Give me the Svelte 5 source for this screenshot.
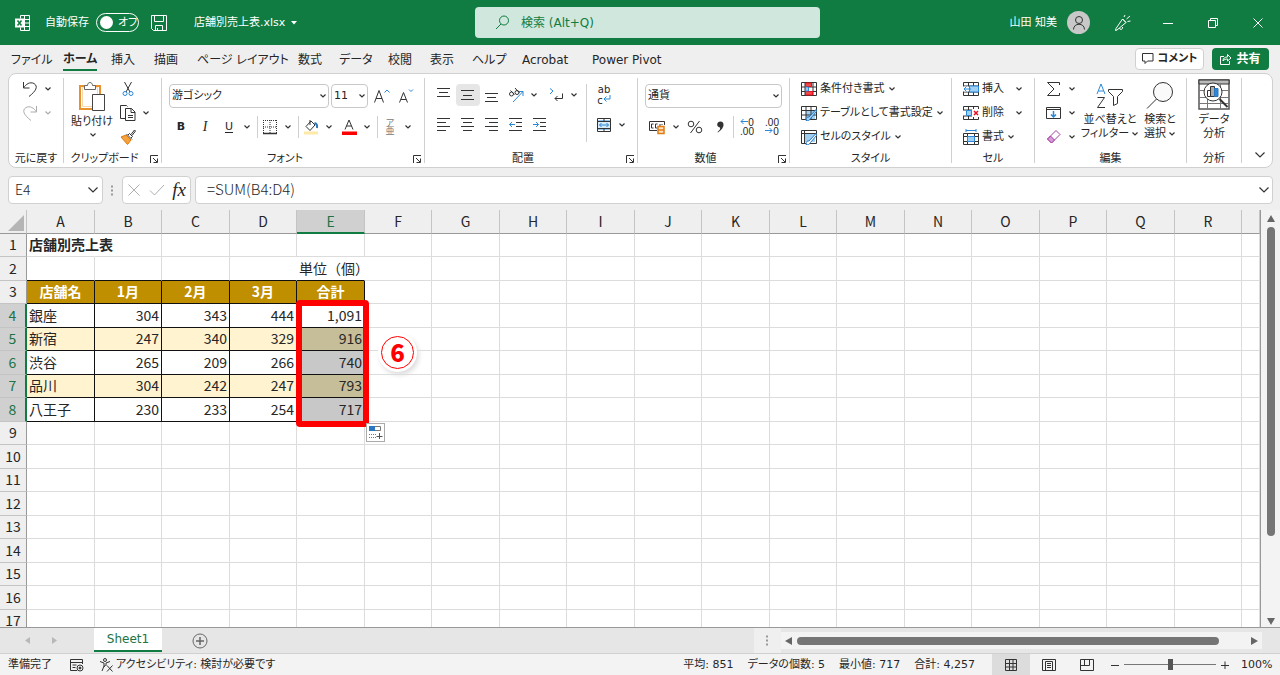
<script lang="ts">
  type Cell = { text: string; cls?: string };

  const tabs = ['ファイル', 'ホーム', '挿入', '描画', 'ページ レイアウト', '数式', 'データ', '校閲', '表示', 'ヘルプ', 'Acrobat', 'Power Pivot'];
  const columns = 'ABCDEFGHIJKLMNOPQR'.split('');
  const rowNumbers = Array.from({ length: 17 }, (_, i) => i + 1);

  const head = ['店舗名', '1月', '2月', '3月', '合計'];
  const sales: [string, number, number, number][] = [
    ['銀座', 304, 343, 444],
    ['新宿', 247, 340, 329],
    ['渋谷', 265, 209, 266],
    ['品川', 304, 242, 247],
    ['八王子', 230, 233, 254],
  ];

  let activeTab = $state('ホーム');
  let formula = $state('=SUM(B4:D4)');
  let zoomLevel = $state(50);

  const totals = sales.map(([, a, b, c]) => a + b + c);
  const sum = totals.reduce((a, b) => a + b, 0);
  const stats = [
    `平均: ${Math.round(sum / totals.length)}`,
    `データの個数: ${totals.length}`,
    `最小値: ${Math.min(...totals)}`,
    `合計: ${sum.toLocaleString('en-US')}`,
  ];

  function cellAt(row: number, col: number): Cell {
    if (row === 1 && col === 0) return { text: '店舗別売上表', cls: 'title open' };
    if (row === 2 && col < 5) {
      if (col === 4) return { text: '単位（個）', cls: 'unit open under' };
      return { text: '', cls: col === 3 ? 'open under' : 'under' };
    }
    if (row === 3 && col < 5) return { text: head[col], cls: 'head boxed' };
    if (row >= 4 && row <= 8 && col < 5) {
      const i = row - 4;
      const band = i % 2 ? ' band' : '';
      if (col === 0) return { text: sales[i][0], cls: 'boxed' + band };
      if (col < 4) return { text: String(sales[i][col]), cls: 'boxed num' + band };
      return { text: totals[i].toLocaleString('en-US'), cls: 'boxed num' + band + (i ? ' selected' : '') };
    }
    return { text: '' };
  }
</script>

{#snippet chevron()}
  <svg class="chev" width="8" height="6" viewBox="0 0 8 6"><path d="M1.5 1.5L4 4l2.5-2.5" /></svg>
{/snippet}

{#snippet bigChevron()}
  <svg class="chev" width="12" height="8" viewBox="0 0 12 8"><path d="M1.5 1.5L6 6l4.500-4.500" /></svg>
{/snippet}

{#snippet drop(label)}
  <button class="drop" aria-label={label}>{@render chevron()}</button>
{/snippet}

{#snippet launcher(label)}
  <button class="launcher" aria-label={label}>
    <svg width="9" height="9" viewBox="0 0 9 9"><path d="M.5 8V.5H8M3 3l4 4M7.500 3.500v4h-4" /></svg>
  </button>
{/snippet}

{#snippet lines(rows)}
  <svg width="16" height="16" viewBox="0 0 16 16">
    {#each rows as [x, y, w]}
      <path d="M{x} {y}.5h{w}" />
    {/each}
  </svg>
{/snippet}

<div class="app">
  <header class="titlebar">
    <div class="title-left">
      <svg class="light" width="16" height="16" viewBox="0 0 16 16">
        <path d="M5.500 3.500v-3h9v15h-9v-3M9.500.5v15M10 4.500h4.500M10 8h4.500M10 11.500h4.500" />
        <path d="M0 3.500h9v9H0z" fill="#fff" stroke="none" />
        <path d="M2.500 5.500l4 5M6.500 5.500l-4 5" stroke="#107c41" stroke-width="1.500" />
      </svg>
      <span class="autosave">自動保存</span>
      <button class="toggle" role="switch" aria-checked="false" aria-label="自動保存"><i></i>オフ</button>
      <button class="save" aria-label="上書き保存">
        <svg class="light" width="16" height="16" viewBox="0 0 16 16"><path d="M.5.500h15v15h-13l-2-2zM3.500.500v6h9v-6M4.500 15.500v-5h7v5M6.500 13v2" /></svg>
      </button>
      <button class="filename">店舗別売上表.xlsx
        <svg width="6" height="4" viewBox="0 0 6 4"><path d="M0 0h6L3 3.500z" fill="#fff" stroke="none" /></svg>
      </button>
    </div>
    <label class="search">
      <svg width="15" height="15" viewBox="0 0 15 15"><circle cx="9" cy="5.500" r="4.500" /><path d="M6 9l-5 5" /></svg>
      <input type="search" placeholder="検索 (Alt+Q)" aria-label="検索" />
    </label>
    <div class="title-right">
      <span class="user">山田 知美</span>
      <button class="avatar" aria-label="アカウント">
        <svg width="14" height="14" viewBox="0 0 14 14"><circle cx="7" cy="4" r="3.500" /><path d="M1.500 13.500c0-7 11-7 11 0" /></svg>
      </button>
      <button class="winbtn" aria-label="新機能">
        <svg class="light" width="18" height="18" viewBox="0 0 18 18"><path d="M2 14.500L8.500 5l3.500 3.500-9 7.500-1.500.5zM5.500 14c.5 2.500 3.500 1.500 3-1M10 3l1-2M12.500 5L16 2M13.500 7.500l3-.5M8.500 5L12 8.500" /></svg>
      </button>
      <button class="winbtn" aria-label="最小化"><svg class="light" width="10" height="10" viewBox="0 0 10 10"><path d="M0 5.500h10" /></svg></button>
      <button class="winbtn" aria-label="元のサイズに戻す"><svg class="light" width="10" height="10" viewBox="0 0 10 10"><path d="M.5 2.500h7v7h-7zM2.500 2.500v-2h7v7h-2" /></svg></button>
      <button class="winbtn" aria-label="閉じる"><svg class="light" width="10" height="10" viewBox="0 0 10 10"><path d="M.5.500l9 9M9.500.500l-9 9" /></svg></button>
    </div>
  </header>

  <nav class="tabs">
    {#each tabs as tab}
      <button class="tab" class:active={tab === activeTab} onclick={() => (activeTab = tab)}><span>{tab}</span></button>
    {/each}
    <div class="actions">
      <button class="comment">
        <svg width="12" height="12" viewBox="0 0 12 12"><path d="M.5.500h10.500v7.500H5.500L3 10.500V8H.5z" /></svg>
        コメント
      </button>
      <button class="share">
        <svg class="light" width="12" height="12" viewBox="0 0 12 12"><path d="M4 3.500H.5v8h9V8M3 8c0-3 2-4 4.500-4V1.500L11 5 7.500 8V6C5.500 6 4 6.500 3 8z" /></svg>
        共有
      </button>
    </div>
  </nav>

  <section class="ribbon">
    <div class="group undo">
      <div class="stack">
        <div class="line">
          <button class="tool" aria-label="元に戻す"><svg width="16" height="16" viewBox="0 0 16 16"><path d="M1.500 1v6h6M1.500 7C4 3 8 .5 12 2.500c4.500 3 2 7.500-5 13" /></svg></button>
          {@render drop('元に戻す一覧')}
        </div>
        <div class="line faded">
          <button class="tool" aria-label="やり直し"><svg width="16" height="16" viewBox="0 0 16 16"><path d="M14.500 1v6h-6M14.500 7C12 3 8 .5 4 2.500c-4.500 3-2 7.500 5 13" /></svg></button>
          {@render drop('やり直し一覧')}
        </div>
      </div>
      <footer>元に戻す</footer>
    </div>

    <div class="group clipboard">
      <div class="body">
        <button class="big paste">
          <svg width="28" height="30" viewBox="0 0 28 30">
            <path d="M2 4h20v23H2z" fill="#fff" stroke="#e8912d" stroke-width="2" />
            <path d="M4.500 5.500h15v19h-15z" fill="#fff" stroke="#f8d9ae" />
            <path d="M6.500 7.500v-4h3c0-4 5-4 5 0h3v4z" fill="#fff" stroke="#666" />
            <path d="M14.500 12.500h12v16h-12z" fill="#fff" stroke="#444" />
          </svg>
          貼り付け
          {@render chevron()}
        </button>
        <div class="stack clips">
          <button class="tool" aria-label="切り取り"><svg width="16" height="16" viewBox="0 0 16 16"><path d="M4.500 1L10 11M11.500 1L6 11" /><circle cx="5" cy="12.500" r="2" stroke="#2b88d8" /><circle cx="11" cy="12.500" r="2" stroke="#2b88d8" /></svg></button>
          <div class="line">
            <button class="tool" aria-label="コピー"><svg width="16" height="16" viewBox="0 0 16 16"><path d="M5.500 13.500h-5v-13h6l1 1M5.500 3.500h6l3.500 3.500v8.500H5.500zM11 3.500V7.500h4M8 10.500h5M8 12.500h5" /></svg></button>
            {@render drop('コピー一覧')}
          </div>
          <button class="tool" aria-label="書式のコピー"><svg width="16" height="16" viewBox="0 0 16 16"><path d="M1 8l5-2 5 5-3.500 4.500z" fill="#f6a23c" stroke="#d97a12" /><path d="M6.500 5l5.500 5.500M8 6l1.500-1.500 3 3L11 9M11 5.500L14.500 1l1 1-3.500 4.500" /></svg></button>
        </div>
      </div>
      <footer>クリップボード{@render launcher('クリップボードの設定')}</footer>
    </div>

    <div class="group font">
      <div class="rows">
        <div class="line">
          <label class="pick family"><select aria-label="フォント"><option>游ゴシック</option></select>{@render chevron()}</label>
          <label class="pick size"><select aria-label="フォント サイズ"><option>11</option></select>{@render chevron()}</label>
          <button class="tool" aria-label="フォント サイズの拡大"><svg width="16" height="16" viewBox="0 0 16 16"><path d="M.5 14.500L5 2.500l4.500 12M2 10.500h6" /><path d="M10.500 4.500l2.500-2.500 2.500 2.500" stroke="#2b88d8" /></svg></button>
          <button class="tool" aria-label="フォント サイズの縮小"><svg width="16" height="16" viewBox="0 0 16 16"><path d="M1.500 14.500L5.500 4.500l4 10M3 11.500h5" /><path d="M11 1.500l2 2 2-2" stroke="#2b88d8" /></svg></button>
        </div>
        <div class="line">
          <button class="tool b">B</button>
          <button class="tool i">I</button>
          <button class="tool u">U</button>
          {@render drop('下線')}
          <i class="sep"></i>
          <button class="tool" aria-label="罫線"><svg width="16" height="16" viewBox="0 0 16 16"><path d="M1 1.500h14M1 8h14M1.500 1v13M8 1v13M14.500 1v13" stroke-dasharray="1 1" /><path d="M1 14.500h14" stroke-width="1.500" /></svg></button>
          {@render drop('罫線一覧')}
          <i class="sep"></i>
          <button class="tool" aria-label="塗りつぶしの色"><svg width="16" height="16" viewBox="0 0 16 16"><path d="M3 7.500L8 2l4 4-5 5.500zM7 1v5" /><path d="M11.500 4c2 .5 3 2 2.500 5" stroke="#2b77c0" stroke-width="2" /><path d="M1 12.500h14v3H1z" fill="#ffe9a8" stroke="none" /></svg></button>
          {@render drop('塗りつぶしの色一覧')}
          <button class="tool color" aria-label="フォントの色"><svg width="16" height="16" viewBox="0 0 16 16"><path d="M4 10.500L8 1l4 9.500M5.500 7h5" /><path d="M1 12.500h15v3.500H1z" fill="#f00" stroke="none" /></svg></button>
          {@render drop('フォントの色一覧')}
          <i class="sep"></i>
          <button class="tool ruby" aria-label="ふりがな"><span>ア</span><span>亜</span></button>
          {@render drop('ふりがな一覧')}
        </div>
      </div>
      <footer>フォント{@render launcher('フォントの設定')}</footer>
    </div>

    <div class="group align">
      <div class="body">
        <div class="rows">
          <div class="line">
            <button class="tool" aria-label="上揃え">{@render lines([[1, 1, 13], [3, 5, 9], [1, 9, 13]])}</button>
            <button class="tool on" aria-label="上下中央揃え">{@render lines([[1, 3, 13], [3, 8, 9], [1, 12, 13]])}</button>
            <button class="tool" aria-label="下揃え">{@render lines([[1, 6, 13], [3, 10, 9], [1, 14, 13]])}</button>
            <button class="tool" aria-label="方向"><svg width="16" height="16" viewBox="0 0 16 16"><circle cx="3.500" cy="7" r="2" /><path d="M2.500 3.500l4 4M7 1l4.500 5" /><circle cx="9" cy="5.500" r="2" /><path d="M5 15L15 4.500M11 4.500h4V9" stroke="#2b88d8" /></svg></button>
            {@render drop('方向一覧')}
            <button class="tool dir" aria-label="文字列の方向"><svg width="16" height="16" viewBox="0 0 16 16"><path d="M2 1.500L5 4 2 7" stroke="#2b88d8" /><path d="M14.500 6.500v5H7M9.500 9L7 11.500 9.500 14" /></svg></button>
            {@render drop('文字列の方向一覧')}
          </div>
          <div class="line">
            <button class="tool" aria-label="左揃え">{@render lines([[1, 1, 13], [1, 5, 9], [1, 9, 13], [1, 13, 9]])}</button>
            <button class="tool" aria-label="中央揃え">{@render lines([[1, 1, 13], [3, 5, 9], [1, 9, 13], [3, 13, 9]])}</button>
            <button class="tool" aria-label="右揃え">{@render lines([[1, 1, 13], [5, 5, 9], [1, 9, 13], [5, 13, 9]])}</button>
            <button class="tool" aria-label="インデントを減らす"><svg width="16" height="16" viewBox="0 0 16 16"><path d="M1 1.500h13M8 5.500h6M8 9.500h6M1 13.500h13" /><path d="M7 7.500H1.500M4 5L1.500 7.500 4 10" stroke="#2b88d8" /></svg></button>
            <button class="tool" aria-label="インデントを増やす"><svg width="16" height="16" viewBox="0 0 16 16"><path d="M1 1.500h13M8 5.500h6M8 9.500h6M1 13.500h13" /><path d="M1 7.500h5.500M4 5l2.500 2.500L4 10" stroke="#2b88d8" /></svg></button>
          </div>
        </div>
        <i class="sep tall"></i>
        <div class="rows merge">
          <button class="tool wrap" aria-label="折り返して全体を表示する"><span>ab</span><span>c<svg width="8" height="8" viewBox="0 0 8 8"><path d="M7 0v4H1M3.500 1.500L1 4l2.500 2.500" stroke="#2b88d8" /></svg></span></button>
          <div class="line">
            <button class="tool" aria-label="セルを結合して中央揃え"><svg width="16" height="16" viewBox="0 0 16 16"><path d="M1.500 4h13v8h-13z" fill="#d8ebf9" stroke="#2b88d8" /><path d="M1.500 1.500h13v13h-13zM1.500 4.500h13M1.500 11.500h13M8 1.500v3M8 11.500v3" /><path d="M3.500 8h9M5.500 6l-2 2 2 2M10.500 6l2 2-2 2" stroke="#2b88d8" /></svg></button>
            {@render drop('結合一覧')}
          </div>
        </div>
      </div>
      <footer>配置{@render launcher('配置の設定')}</footer>
    </div>

    <div class="group number">
      <div class="rows">
        <label class="pick"><select aria-label="表示形式"><option>通貨</option></select>{@render chevron()}</label>
        <div class="line">
          <button class="tool" aria-label="通貨表示形式"><svg width="16" height="16" viewBox="0 0 16 16"><path d="M8 11.500H.5v-9h15V6M4.500 5h-2v4h2M8.500 5h-2v4h2M11 5v2M13 5v1" /><path d="M9 7.500h6v7H9zM9 11h6" fill="#fbe3c4" stroke="#e07b12" stroke-width="1.500" /></svg></button>
          {@render drop('通貨一覧')}
          <button class="tool" aria-label="パーセント スタイル"><svg width="16" height="16" viewBox="0 0 16 16"><circle cx="4" cy="5" r="2.800" /><circle cx="12" cy="11" r="2.800" /><path d="M12.500 2l-9 12" /></svg></button>
          <button class="tool" aria-label="桁区切りスタイル"><svg width="16" height="16" viewBox="0 0 16 16"><path d="M8.500 2.500c4 0 5 6-2.500 11l-.5-.5C8 11 8.500 9.500 8 8.500 4 8 4.500 2.500 8.500 2.500z" fill="#333" stroke="none" /></svg></button>
          <i class="sep"></i>
          <button class="tool dec" aria-label="小数点以下の表示桁数を増やす"><span><svg width="8" height="7" viewBox="0 0 8 7"><path d="M8 3.500H1M3.500 1L1 3.500 3.500 6" stroke="#2b88d8" /></svg>0</span><span>.00</span></button>
          <button class="tool dec" aria-label="小数点以下の表示桁数を減らす"><span>.00</span><span><svg width="8" height="7" viewBox="0 0 8 7"><path d="M0 3.500h7M4.500 1L7 3.500 4.500 6" stroke="#2b88d8" /></svg>0</span></button>
        </div>
      </div>
      <footer>数値{@render launcher('表示形式の設定')}</footer>
    </div>

    <div class="group style">
      <div class="stack">
        <button class="item">
          <svg width="16" height="16" viewBox="0 0 16 16"><path d="M.5 1.500h15v13H.5zM.5 6h15M.5 10.500h15M4 1.500v13M12 1.500v13" /><path d="M4.500 2h6v3.500h-6zM4.500 10.500h7V14h-7z" fill="#ef4a4a" stroke="#e81123" /><path d="M4.500 6v4h3V6z" fill="#9fd0f3" stroke="#2b88d8" /></svg>
          条件付き書式{@render chevron()}
        </button>
        <button class="item">
          <svg width="16" height="16" viewBox="0 0 16 16"><path d="M5 6h9v8H5z" fill="#9fd0f3" stroke="none" /><path d="M.5 1.500h15v13H.5zM.5 5.500h15M.5 10h15M5 1.500v13M10 1.500v13" /><path d="M5 15.500c0-3 1.500-4 3-3.500L15 4.500l.5 2-6 7c-1 2-2.500 2.500-4.500 2z" fill="#9fd0f3" stroke="#2b77c0" /></svg>
          テーブルとして書式設定{@render chevron()}
        </button>
        <button class="item">
          <svg width="16" height="16" viewBox="0 0 16 16"><path d="M.5 1.500h15v13H.5zM.5 4.500h15M3.500 1.500v13" /><path d="M4 5h10v8H4z" fill="#9fd0f3" stroke="none" /><path d="M5 15.500c0-3 1.500-4 3-3.500L15 4.500l.5 2-6 7c-1 2-2.500 2.500-4.500 2z" fill="#fff" stroke="#2b77c0" /></svg>
          セルのスタイル{@render chevron()}
        </button>
      </div>
      <footer>スタイル</footer>
    </div>

    <div class="group cells">
      <div class="stack">
        <button class="item far">
          <svg width="16" height="16" viewBox="0 0 16 16"><path d="M.5 1.500h15v13H.5zM.5 5h15M.5 11h15M5.500 1.500v13M10.500 1.500v13" /><path d="M6.500 5h9v6h-9z" fill="#9fd0f3" stroke="#2b88d8" /><path d="M0 5.500h6v5H0z" fill="#fff" stroke="none" /><path d="M8 8H1M3.500 5.500L1 8l2.500 2.500" stroke="#2b88d8" /></svg>
          <span>挿入</span>{@render chevron()}
        </button>
        <button class="item far">
          <svg width="16" height="16" viewBox="0 0 16 16"><path d="M.5 5V1.500h15V4M.5 11v3.500h15V12M5.500 1.500V5M10.500 1.500V4M5.500 11v3.500M10.500 12v2.500M0 5h9M0 11h9" /><path d="M3.500 5.500h5v5h-5z" fill="#9fd0f3" stroke="#2b88d8" /><path d="M11 6l4 4M15 6l-4 4" stroke="#e81123" stroke-width="1.500" /></svg>
          <span>削除</span>{@render chevron()}
        </button>
        <button class="item">
          <svg width="16" height="16" viewBox="0 0 16 16"><path d="M3 1.500h10M3 0v3M13 0v3" stroke="#2b88d8" /><path d="M.5 4.500h15v11H.5zM.5 7.500h15M.5 12.500h15M4.500 4.500v11M11.500 4.500v11" /><path d="M4.500 7.500h7v5h-7z" fill="#9fd0f3" stroke="#2b88d8" /></svg>
          <span>書式</span>{@render chevron()}
        </button>
      </div>
      <footer>セル</footer>
    </div>

    <div class="group edit">
      <div class="body">
        <div class="stack">
          <div class="line"><button class="tool" aria-label="合計"><svg width="16" height="16" viewBox="0 0 16 16"><path d="M13.500 4V1.500h-12L8 8l-6.500 6.500h12V12" /></svg></button>{@render drop('合計一覧')}</div>
          <div class="line"><button class="tool" aria-label="フィル"><svg width="16" height="16" viewBox="0 0 16 16"><path d="M.5 2.500h14v11H.5zM.5 4.500h14" /><path d="M7.500 6v6M5 9.500L7.500 12 10 9.500" stroke="#2b88d8" stroke-width="1.500" /></svg></button>{@render drop('フィル一覧')}</div>
          <div class="line"><button class="tool" aria-label="クリア"><svg width="16" height="16" viewBox="0 0 16 16"><path d="M1.500 10L10 1.500l4 4L5.500 14z" fill="#fff" stroke="#a33ea1" /><path d="M1.500 10L4.500 7l4 4-3 3z" fill="#d79bd6" stroke="#a33ea1" /></svg></button>{@render drop('クリア一覧')}</div>
        </div>
        <button class="big sort">
          <svg width="28" height="28" viewBox="0 0 28 28"><path d="M1 12L5 2l4 10M2.500 9h5" stroke="#2b88d8" /><path d="M1.500 15.500h7l-7 10h7.500" /><path d="M12.500 7.500h14v2l-5 5v7l-4 2v-9l-5-5z" /></svg>
          <span>並べ替えと<br />フィルター{@render chevron()}</span>
        </button>
        <button class="big find">
          <svg width="28" height="28" viewBox="0 0 28 28"><circle cx="17" cy="10" r="9.500" fill="#fafafa" /><path d="M10.500 17L1 26.500" /></svg>
          <span>検索と<br />選択{@render chevron()}</span>
        </button>
      </div>
      <footer>編集</footer>
    </div>

    <div class="group analyze">
      <button class="big">
        <svg width="32" height="31" viewBox="0 0 32 31">
          <path d="M1 1h30v29H1z" fill="#fff" stroke="#555" stroke-width="1.500" />
          <path d="M1 1h30v4H1z" fill="#bbb" /><path d="M1 11.500h30M1 18.500h30M1 24.500h30M9.500 5v25M22.500 5v25" stroke="#777" />
          <circle cx="15" cy="13" r="9" fill="#fff" /><path d="M21.500 20l8 8" stroke-width="2" />
          <path d="M9.500 11.500h3v6h-3z" fill="#fff" /><path d="M12.500 7.500h4v10h-4z" fill="#aaa" /><path d="M16.500 9.500h3.500v8h-3.500z" fill="#2b88d8" stroke="#2b77c0" />
        </svg>
        <span>データ<br />分析</span>
      </button>
      <footer>分析</footer>
    </div>

    <button class="collapse" aria-label="リボンを折りたたむ">{@render bigChevron()}</button>
  </section>

  <div class="formula-bar">
    <div class="field name"><input value="E4" aria-label="名前ボックス" />
      <button aria-label="名前一覧">{@render bigChevron()}</button>
    </div>
    <svg class="dots" width="3" height="11" viewBox="0 0 3 11"><path d="M0 1.500h2M0 5.500h2M0 9.500h2" stroke-width="2" /></svg>
    <div class="field fx">
      <button aria-label="キャンセル"><svg class="muted" width="14" height="14" viewBox="0 0 14 14"><path d="M1.500 1.500l11 11M12.500 1.500l-11 11" /></svg></button>
      <button aria-label="入力"><svg class="muted" width="16" height="14" viewBox="0 0 16 14"><path d="M1 7.500l4.500 4.500L15 2" /></svg></button>
      <button class="fn" aria-label="関数の挿入">fx</button>
    </div>
    <div class="field formula"><input bind:value={formula} aria-label="数式バー" />
      <button aria-label="数式バーの展開">{@render bigChevron()}</button>
    </div>
  </div>

  <main class="sheet">
    <div class="grid">
      <table>
        <colgroup>
          <col class="rowhead" />
          {#each columns as c (c)}<col class="data" />{/each}
          <col />
        </colgroup>
        <thead>
          <tr>
            <th class="corner"><svg width="16" height="16" viewBox="0 0 16 16"><path d="M16 0v16H0z" fill="#b5b5b5" stroke="none" /></svg></th>
            {#each columns as c (c)}<th class:current={c === 'E'}>{c}</th>{/each}
            <th></th>
          </tr>
        </thead>
        <tbody>
          {#each rowNumbers as row (row)}
            <tr>
              <th class:current={row >= 4 && row <= 8}>{row}</th>
              {#each columns as c, col (c)}
                {@const cell = cellAt(row, col)}
                <td class={cell.cls}>{cell.text}</td>
              {/each}
              <td></td>
            </tr>
          {/each}
        </tbody>
      </table>
      <div class="frame"></div>
      <div class="badge">6</div>
      <button class="quick" aria-label="クイック分析">
        <svg width="15" height="15" viewBox="0 0 15 15"><path d="M1.500 1.500h11v4h-11z" stroke="#777" /><path d="M1 1h6v5H1z" fill="#2b77c0" stroke="none" /><path d="M1 9.500h7M1 12.500h7" stroke="#777" stroke-dasharray="1 1" /><path d="M11.500 8v6M8.500 11.500h6" stroke="#555" /></svg>
      </button>
    </div>
    <div class="vscroll">
      <svg width="8" height="7" viewBox="0 0 8 7"><path d="M4 0l4 7H0z" /></svg>
      <div class="track"><div class="thumb"></div></div>
      <svg width="8" height="7" viewBox="0 0 8 7"><path d="M4 7L0 0h8z" /></svg>
    </div>
  </main>

  <div class="sheet-bar">
    <div class="steps">
      <svg width="5" height="7" viewBox="0 0 5 7"><path d="M5 0v7L0 3.500z" /></svg>
      <svg width="5" height="7" viewBox="0 0 5 7"><path d="M0 0v7l5-3.500z" /></svg>
    </div>
    <button class="sheet-tab">Sheet1</button>
    <button class="add" aria-label="新しいシート"><svg width="16" height="16" viewBox="0 0 16 16"><circle cx="8" cy="8" r="7" stroke="#666" /><path d="M8 4v8M4 8h8" stroke="#666" stroke-width="1.500" /></svg></button>
    <div class="grip"><svg class="dots" width="3" height="11" viewBox="0 0 3 11"><path d="M0 1.500h2M0 5.500h2M0 9.500h2" stroke-width="2" /></svg></div>
    <div class="hscroll">
      <svg width="7" height="8" viewBox="0 0 7 8"><path d="M7 0v8L0 4z" /></svg>
      <div class="track"><div class="thumb"></div></div>
      <svg width="7" height="8" viewBox="0 0 7 8"><path d="M0 0v8l7-4z" /></svg>
    </div>
  </div>

  <footer class="status">
    <span>準備完了</span>
    <svg width="15" height="14" viewBox="0 0 15 14"><path d="M8 12.500H1.500v-11h12V6M1.500 4.500h12M3.500 7h4M3.500 9.500h3" /><circle cx="11" cy="10" r="3" /><circle cx="11" cy="10" r="1" fill="#333" /></svg>
    <button class="access">
      <svg width="15" height="14" viewBox="0 0 15 14"><circle cx="6" cy="2" r="1.500" /><path d="M1 3.500l4 1.500v3L3 13M11 3.500L7 5v2.500M5 9l1.500-2M8 7.500l5.500 6M13.500 7.500l-5.500 6" /></svg>
      アクセシビリティ: 検討が必要です
    </button>
    <div class="stats">
      {#each stats as s}<span>{s}</span>{/each}
    </div>
    <div class="views">
      <button class="on" aria-label="標準"><svg width="14" height="14" viewBox="0 0 14 14"><path d="M1.500 1.500h11v11h-11zM1.500 5.500h11M1.500 9h11M5.500 1.500v11M9 1.500v11" /></svg></button>
      <button aria-label="ページ レイアウト"><svg width="14" height="14" viewBox="0 0 14 14"><path d="M.5 1.500h13v11H.5zM3.500 3.500h7v9M3.500 3.500v9M5 5.500h4M5 7.500h4M5 9.500h4" /></svg></button>
      <button aria-label="改ページ プレビュー"><svg width="14" height="14" viewBox="0 0 14 14"><path d="M.5 1.500h13v11H.5zM4.500 1.500v6M9.500 1.500v6h-9" /></svg></button>
    </div>
    <div class="zoom">
      <button aria-label="縮小"><svg width="8" height="8" viewBox="0 0 8 8"><path d="M0 4.500h8" /></svg></button>
      <input type="range" min="0" max="100" bind:value={zoomLevel} aria-label="ズーム" />
      <button aria-label="拡大"><svg width="8" height="8" viewBox="0 0 8 8"><path d="M0 4.500h8M4 .5v8" /></svg></button>
    </div>
    <span class="percent">100%</span>
  </footer>
</div>

<style>
  :global(body) {
    margin: 0;
    background: #efefef;
  }
  .app {
    display: flex;
    flex-direction: column;
    height: 100vh;
    background: #efefef;
    color: #262626;
    font-family: 'DejaVu Sans', 'Noto Sans CJK JP', sans-serif;
    font-size: 11px;
    font-feature-settings: 'palt';
    line-height: 14px;
    overflow: hidden;
  }
  button,
  input,
  select {
    margin: 0;
    padding: 0;
    border: 0;
    background: none;
    color: inherit;
    font: inherit;
    font-feature-settings: inherit;
    outline: 0;
    white-space: nowrap;
  }
  svg {
    display: block;
    flex: none;
    fill: none;
    stroke: #333;
  }
  svg.light {
    stroke: #fff;
  }
  svg.muted {
    stroke: #b0b0b0;
  }
  svg.dots {
    stroke: #999;
  }
  svg.chev {
    stroke: #333;
    stroke-width: 1.2;
  }

  /* title bar */
  .titlebar {
    display: grid;
    grid-template-columns: 1fr 345px 1fr;
    align-items: center;
    flex: none;
    height: 45px;
    padding-left: 15px;
    background: #107c41;
    color: #fff;
  }
  .title-left,
  .title-right {
    display: flex;
    align-items: center;
  }
  .autosave {
    margin: 0 7px 0 14px;
  }
  .toggle {
    display: flex;
    align-items: center;
    gap: 5px;
    width: 43px;
    height: 19px;
    padding-left: 3px;
    border: 1px solid #fff;
    border-radius: 10px;
  }
  .toggle i {
    flex: none;
    width: 13px;
    height: 13px;
    border-radius: 50%;
    background: #fff;
  }
  .save {
    margin: 0 27px 0 12px;
  }
  .filename {
    display: flex;
    align-items: center;
    gap: 6px;
  }
  .search {
    display: flex;
    align-items: center;
    gap: 11px;
    height: 31px;
    padding-left: 20px;
    border-radius: 4px;
    background: #cfe7dc;
    color: #107c41;
  }
  .search svg {
    stroke: #107c41;
  }
  .search input {
    flex: 1;
    font-size: 12px;
  }
  .search input::placeholder {
    color: #107c41;
    opacity: 1;
  }
  .title-right {
    justify-content: flex-end;
  }
  .avatar {
    display: grid;
    place-items: center;
    width: 23px;
    height: 23px;
    margin: 0 10px;
    border-radius: 50%;
    background: #c8c8c8;
  }
  .winbtn {
    display: grid;
    place-items: center;
    width: 45px;
    height: 45px;
  }

  /* tabs */
  .tabs {
    display: grid;
    grid-template-columns: 52px 48px 43px 43px 101px 41px 49px 42px 42px 50px 70px 80px 1fr;
    align-items: center;
    flex: none;
    height: 28px;
    padding: 0 11px;
    font-size: 12px;
  }
  .tab {
    height: 28px;
    text-align: left;
  }
  .tab span {
    display: inline-block;
    height: 20px;
    padding-top: 2px;
    line-height: 20px;
  }
  .tab.active span {
    border-bottom: 2px solid #107c41;
    font-weight: bold;
  }
  .actions {
    display: flex;
    justify-content: flex-end;
    gap: 8px;
  }
  .actions button {
    display: flex;
    align-items: center;
    justify-content: center;
    gap: 4px;
    height: 22px;
    border-radius: 4px;
    font-weight: bold;
  }
  .comment {
    width: 69px;
    border: 1px solid #d0d0d0;
    background: #fff;
    font-size: 11px;
  }
  .share {
    width: 57px;
    background: #107c41;
    color: #fff;
  }

  /* ribbon */
  .ribbon {
    display: flex;
    flex: none;
    height: 93px;
    margin: 0 7px 0 8px;
    border: 1px solid #d0d0d0;
    border-radius: 8px;
    background: #fff;
  }
  .group {
    display: flex;
    flex-direction: column;
    justify-content: space-between;
    flex: none;
    box-sizing: border-box;
    margin: 4px 0;
    border-right: 1px solid #d0d0d0;
  }
  .group footer {
    position: relative;
    height: 11px;
    text-align: center;
  }
  .undo { width: 55px; }
  .clipboard { width: 98px; }
  .font { width: 263px; }
  .align { width: 213px; }
  .number { width: 152px; }
  .style { width: 162px; }
  .cells { width: 83px; }
  .edit { width: 152px; }
  .analyze { width: 55px; }
  .line,
  .body {
    display: flex;
    align-items: center;
  }
  .body {
    align-items: flex-start;
  }
  .clipboard footer,
  .font footer,
  .align footer,
  .number footer {
    padding-right: 16px;
  }
  .launcher {
    position: absolute;
    right: 2px;
    bottom: -2px;
    height: 11px;
  }
  .tool {
    display: grid;
    place-items: center;
    width: 24px;
    height: 22px;
  }
  .tool.on {
    border-radius: 4px;
    background: #e6e6e6;
  }
  .drop {
    display: grid;
    place-items: center;
    width: 12px;
    height: 22px;
  }
  .sep {
    width: 1px;
    height: 22px;
    margin-left: 4px;
    background: #d0d0d0;
  }
  .sep.tall {
    height: 58px;
    margin: 6px 0 0 6px;
  }
  .rows {
    display: grid;
    gap: 8px;
    padding: 6px 0 0 7px;
  }
  .rows.merge {
    padding-left: 5px;
  }
  .stack {
    display: grid;
    grid-auto-rows: 22px;
    gap: 2px;
  }
  .undo .stack {
    padding-left: 9px;
  }
  .faded {
    opacity: 0.4;
  }
  .big {
    display: flex;
    flex-direction: column;
    align-items: center;
    gap: 3px;
  }
  .big span {
    text-align: center;
  }
  .big .chev {
    display: inline-block;
    margin-left: 2px;
    vertical-align: middle;
  }
  .paste {
    width: 52px;
    padding: 4px 0 0 4px;
  }
  .pick {
    position: relative;
    display: flex;
    height: 24px;
    margin-right: 7px;
  }
  .pick select {
    width: 100%;
    padding-left: 2px;
    border: 1px solid #c8c8c8;
    border-radius: 4px;
    appearance: none;
  }
  .pick .chev {
    position: absolute;
    right: 2px;
    top: 9px;
  }
  .pick.family {
    width: 160px;
    margin-right: 2px;
  }
  .pick.size {
    width: 37px;
    margin-right: 2px;
  }
  .b {
    font-weight: bold;
  }
  .i {
    font-family: 'Liberation Serif', serif;
    font-size: 14px;
    font-style: italic;
  }
  .u {
    text-decoration: underline;
    text-underline-offset: 2px;
  }
  .color {
    margin-left: 2px;
  }
  .ruby,
  .wrap,
  .dec {
    align-content: center;
    font-size: 9px;
    line-height: 8px;
  }
  .ruby {
    color: #777;
  }
  .dec {
    font-family: 'Liberation Sans', sans-serif;
    font-size: 10px;
    line-height: 9px;
  }
  .wrap {
    font-size: 10px;
    line-height: 11px;
  }
  .wrap span,
  .dec span {
    display: flex;
  }
  .dir {
    margin-left: 4px;
  }
  .number .line {
    gap: 1px;
  }
  .number .sep {
    margin: 0;
  }
  .style .stack,
  .cells .stack {
    padding-left: 11px;
  }
  .item {
    display: flex;
    align-items: center;
    gap: 3px;
  }
  .item.far span {
    margin-right: 8px;
  }
  .edit .stack {
    padding-left: 7px;
  }
  .sort {
    width: 52px;
    margin-left: 6px;
    padding-top: 4px;
  }
  .find {
    width: 48px;
    padding-top: 4px;
  }
  .analyze .big {
    padding-top: 1px;
  }
  .collapse {
    align-self: flex-end;
    margin: 0 0 8px 12px;
  }

  /* formula bar */
  .formula-bar {
    display: flex;
    align-items: center;
    flex: none;
    padding: 8px 7px 6px 8px;
  }
  .field {
    display: flex;
    align-items: center;
    box-sizing: border-box;
    height: 28px;
    border: 1px solid #d0d0d0;
    border-radius: 4px;
    background: #fff;
  }
  .field input {
    flex: 1;
    min-width: 0;
    padding-bottom: 2px;
    font-family: 'Noto Sans CJK JP', sans-serif;
    font-size: 14px;
    font-weight: 300;
    line-height: 20px;
  }
  .name {
    width: 95px;
    padding: 0 3px 0 6px;
  }
  .formula-bar .dots {
    margin: 0 8px;
  }
  .fx {
    justify-content: space-between;
    width: 69px;
    padding: 0 4px;
  }
  .fn {
    font-family: 'Liberation Serif', serif;
    font-size: 19px;
    font-style: italic;
  }
  .formula {
    flex: 1;
    margin-left: 4px;
    padding: 0 2px 0 11px;
  }
  .formula input {
    font-size: 15px;
  }

  /* sheet */
  .sheet {
    display: flex;
    flex: 1;
    min-height: 0;
    border-bottom: 1px solid #999;
  }
  .grid {
    position: relative;
    flex: 1;
    min-width: 0;
    overflow: hidden;
    border-right: 1px solid #999;
    font-family: 'Noto Sans CJK JP', sans-serif;
    font-size: 14px;
    font-feature-settings: normal;
    line-height: 18px;
  }
  table {
    width: 100%;
    border-spacing: 0;
    table-layout: fixed;
    background: #fff;
  }
  col.rowhead { width: 27px; }
  col.data { width: 67px; }
  col.data:nth-child(even) { width: 68px; }
  tr {
    height: 24px;
  }
  tbody tr:nth-child(odd) {
    height: 23px;
  }
  th,
  td {
    box-sizing: border-box;
    padding: 0 2px 2px;
    border-right: 1px solid #dcdcdc;
    border-bottom: 1px solid #dcdcdc;
    white-space: nowrap;
  }
  th {
    padding: 0 0 2px;
    border-color: #c4c4c4;
    background: #efefef;
    font-weight: 400;
  }
  thead th {
    border-bottom-color: #999;
  }
  tbody th {
    border-right-color: #999;
  }
  th.current {
    background: #d0d0d0;
    color: #217346;
  }
  thead th.current {
    padding-bottom: 1px;
    border-bottom: 2px solid #107c41;
  }
  tbody th.current {
    border-right: 2px solid #107c41;
  }
  .corner svg {
    margin: 4px 0 0 8px;
  }
  td.title {
    font-weight: bold;
  }
  td.open {
    border-right-color: #fff;
  }
  td.under {
    border-bottom-color: #111;
  }
  td.boxed {
    border-color: #111;
  }
  td.head {
    background: #bf8f00;
    color: #fff;
    font-weight: bold;
    text-align: center;
  }
  td.num {
    text-align: right;
  }
  td.band {
    background: #fff3d0;
  }
  td.selected {
    background: #c8c8c8;
  }
  td.selected.band {
    background: #c6bd99;
  }
  .frame {
    position: absolute;
    left: 296px;
    top: 90px;
    width: 61px;
    height: 115px;
    border: 6px solid #f00;
    border-radius: 4px;
  }
  .badge {
    position: absolute;
    left: 381px;
    top: 126px;
    width: 31px;
    height: 31px;
    border: 1px solid #f00;
    border-radius: 50%;
    background: #fff;
    box-shadow: 0 0 0 3px #fff, 2px 3px 5px 3px #ddd;
    color: #f00;
    font-size: 24px;
    font-weight: 900;
    line-height: 30px;
    text-align: center;
  }
  .quick {
    position: absolute;
    left: 366px;
    top: 213px;
    padding: 1px;
    border: 1px solid #aaa;
    background: #fff;
  }
  .vscroll {
    display: flex;
    flex-direction: column;
    align-items: center;
    gap: 5px;
    width: 19px;
    padding: 5px 0 2px;
    background: #f3f3f3;
  }
  .vscroll svg,
  .hscroll svg {
    fill: #666;
    stroke: none;
  }
  .track {
    flex: 1;
  }
  .vscroll .thumb {
    width: 8px;
    height: 80%;
  }
  .thumb {
    border-radius: 4px;
    background: #757575;
  }

  /* sheet tabs */
  .sheet-bar {
    display: flex;
    align-items: center;
    flex: none;
    height: 25px;
    border-bottom: 1px solid #d0d0d0;
    background: #e6e6e6;
  }
  .steps {
    display: flex;
    gap: 22px;
    width: 69px;
    padding-left: 25px;
  }
  .steps svg {
    fill: #b8b8b8;
    stroke: none;
  }
  .sheet-tab {
    align-self: flex-start;
    width: 68px;
    height: 24px;
    border-bottom: 2px solid #107c41;
    background: #fff;
    color: #217346;
    font-size: 12px;
  }
  .add {
    margin-left: 30px;
  }
  .grip {
    display: grid;
    place-items: center;
    width: 27px;
    height: 25px;
    margin-left: auto;
    background: #efefef;
  }
  .hscroll {
    display: flex;
    align-items: center;
    gap: 5px;
    width: 473px;
    height: 17px;
    margin-right: 18px;
    padding: 0 4px;
    background: #f3f3f3;
  }
  .hscroll .thumb {
    width: 94%;
    height: 8px;
  }

  /* status bar */
  .status {
    display: flex;
    align-items: center;
    flex: none;
    height: 21px;
    padding: 0 8px;
    background: #f3f3f3;
  }
  .status > svg {
    margin: 0 15px 0 17px;
  }
  .access {
    display: flex;
    align-items: center;
    gap: 2px;
  }
  .stats {
    display: flex;
    gap: 14px;
    margin-left: auto;
  }
  .views {
    display: flex;
    margin-left: 17px;
  }
  .views button {
    display: grid;
    place-items: center;
    width: 38px;
    height: 21px;
  }
  .views .on {
    background: #dcdcdc;
  }
  .zoom {
    display: flex;
    align-items: center;
    gap: 5px;
    margin-left: 5px;
  }
  .zoom input {
    width: 92px;
    height: 12px;
    appearance: none;
    background: linear-gradient(#777, #777) center / 100% 1px no-repeat;
  }
  .zoom input::-webkit-slider-thumb {
    width: 5px;
    height: 11px;
    appearance: none;
    background: #555;
  }
  .percent {
    width: 31px;
    margin-left: 12px;
  }
</style>
